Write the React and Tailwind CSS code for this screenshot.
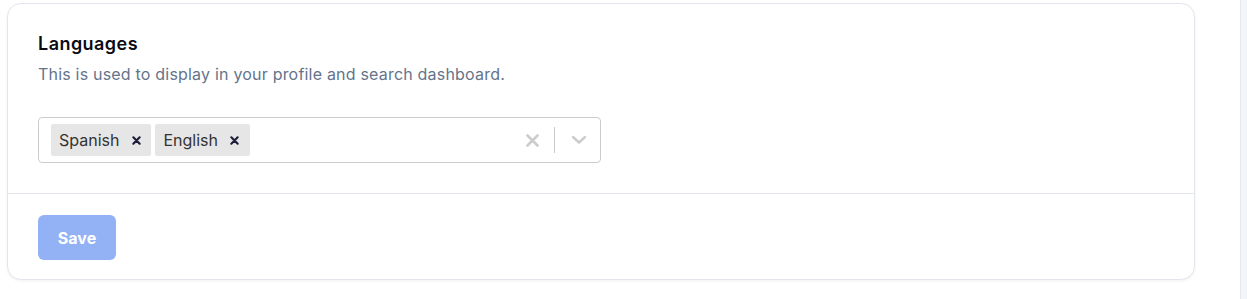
import React from "react";

function Tag({ label }) {
  return (
    <div className="flex items-center h-[32px] bg-[#e6e6e6] rounded-[2px] m-[2px]">
      <span className="pl-[8px] pr-[6px] text-[16px] text-[#333333]">{label}</span>
      <span className="flex items-center justify-center w-[22px] h-full text-[#1e1e3a] mr-[4px]">
        <svg width="9" height="9" viewBox="0 0 10 10" aria-hidden="true">
          <path d="M1.5 1.5 L8.5 8.5 M8.5 1.5 L1.5 8.5" stroke="currentColor" strokeWidth="2.4" strokeLinecap="round" />
        </svg>
      </span>
    </div>
  );
}

export default function App() {
  return (
    <div
      className="flex w-full h-[299px] bg-white overflow-hidden"
      style={{ fontFamily: "Inter, 'Noto Sans', sans-serif" }}
    >
      <div className="flex-1 pl-[7px] pt-[3px]">
        <div className="w-[1188px] h-[277px] rounded-[14px] border border-[#e3e6ec] bg-white shadow-[0_1px_3px_rgba(0,0,0,0.06)] flex flex-col">
          <div className="px-[30px] pt-[26px] pb-[30px] border-b border-[#e3e6ec]">
            <h2 className="text-[18px] leading-[28px] font-semibold tracking-[0.45px] text-[#0b0b14]">Languages</h2>
            <p className="mt-[4px] text-[16px] leading-[24px] tracking-[0.2px] text-[#64748b]">
              This is used to display in your profile and search dashboard.
            </p>
            <div className="mt-[31px] w-[563px] h-[46px] rounded-[4px] border border-[#cccccc] flex items-center">
              <div className="flex-1 flex items-center pl-[10px]">
                <Tag label="Spanish" />
                <Tag label="English" />
              </div>
              <div className="flex items-center h-full">
                <div className="pr-[15px] text-[#cccccc] flex items-center">
                  <svg width="13" height="13" viewBox="0 0 13 13" aria-hidden="true">
                    <path d="M1.5 1.5 L11.5 11.5 M11.5 1.5 L1.5 11.5" stroke="currentColor" strokeWidth="2.6" strokeLinecap="round" />
                  </svg>
                </div>
                <div className="w-px h-[26px] bg-[#cccccc]" />
                <div className="pl-[16px] pr-[13px] text-[#cccccc] flex items-center">
                  <svg width="16" height="10" viewBox="0 0 16 10" aria-hidden="true">
                    <path d="M2 2 L8 7.5 L14 2" stroke="currentColor" strokeWidth="2.4" strokeLinecap="round" strokeLinejoin="round" fill="none" />
                  </svg>
                </div>
              </div>
            </div>
          </div>
          <div className="px-[30px] pt-[21px]">
            <button className="w-[78px] h-[45px] rounded-[6px] bg-[#92b2f5] text-white text-[16px] font-bold">
              Save
            </button>
          </div>
        </div>
      </div>
      <div className="w-[7px] h-full bg-[#f4f5f9] border-l border-[#e6e8ee]" />
    </div>
  );
}
